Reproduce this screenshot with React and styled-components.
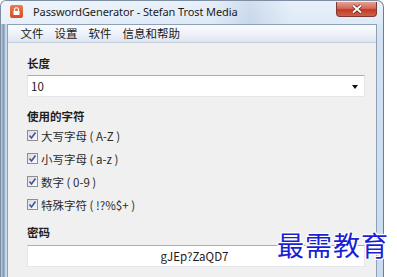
import React from "react";
import styled, { createGlobalStyle } from "styled-components";

const GlobalStyle = createGlobalStyle`
  html, body {
    margin: 0;
    padding: 0;
    background: #ffffff;
  }
  body {
    width: 397px;
    height: 277px;
    overflow: hidden;
    font-family: "Noto Sans CJK SC", "Noto Sans", sans-serif;
  }
`;

const Page = styled.div`
  position: relative;
  width: 397px;
  height: 277px;
  overflow: hidden;
`;

const Window = styled.div`
  width: 384px;
  height: 300px;
  box-sizing: border-box;
  border-radius: 6px 7px 0 0;
  border: 1px solid #7d8ea3;
  border-bottom: none;
  border-right-color: #6d7d90;
  background: linear-gradient(180deg, #e4eef9 0%, #d3e2f3 12%, #c9dbef 100%);
  display: flex;
  flex-direction: column;
  overflow: hidden;
`;

const TitleBar = styled.div`
  height: 23px;
  display: flex;
  align-items: flex-start;
  padding-left: 9px;
  background: linear-gradient(90deg, rgba(255,255,255,0.4) 0%, rgba(255,255,255,0.12) 55%, rgba(160,182,210,0.3) 65%, rgba(255,255,255,0.15) 76%);
`;

const AppIcon = styled.div`
  width: 13px;
  height: 13px;
  margin-top: 4px;
  border-radius: 2px;
  background: linear-gradient(180deg, #ee7b4d, #d34c25);
  display: flex;
  align-items: center;
  justify-content: center;
`;

const Title = styled.div`
  margin-left: 10px;
  margin-top: 3px;
  font-family: "Noto Sans", sans-serif;
  font-size: 11px;
  line-height: 16px;
  color: #1c1c1c;
  letter-spacing: -0.1px;
`;

const CloseButton = styled.div`
  margin-left: auto;
  margin-right: 6px;
  width: 41px;
  height: 15px;
  margin-top: 1px;
  box-sizing: border-box;
  border: 1px solid #7a3a33;
  border-top: none;
  border-radius: 0 0 4px 4px;
  background: linear-gradient(180deg, #e5a094 0%, #d46a58 45%, #c23a26 55%, #d0614a 100%);
  display: flex;
  align-items: center;
  justify-content: center;
`;

const Frame = styled.div`
  flex: 1;
  display: flex;
  padding-left: 6px;
  padding-right: 6px;
  background: linear-gradient(90deg, #c4d4e6 0px, #9fb3ca 1px, #7f95ae 3px, #bcd0e6 4px, #cfe0f2 6px, transparent 6px);
`;

const Inner = styled.div`
  flex: 1;
  display: flex;
  flex-direction: column;
  border: 1px solid #8ea0b6;
  border-bottom: none;
`;

const MenuBar = styled.div`
  height: 17px;
  display: flex;
  align-items: center;
  padding-left: 7px;
  background: linear-gradient(180deg, #f9fbfe 0%, #eef2f9 50%, #dde5f1 100%);
  border-bottom: 1px solid #c5cfdc;
`;

const MenuItem = styled.span`
  padding: 0 5.5px;
  font-size: 11.5px;
  line-height: 17px;
  color: #1a1a1a;
`;

const Client = styled.div`
  flex: 1;
  background: #f0f0f0;
  padding: 12px 11px 0 19px;
  display: flex;
  flex-direction: column;
`;

const Label = styled.div`
  font-size: 11.5px;
  font-weight: 700;
  line-height: 16px;
  color: #1e1e1e;
  margin-top: ${(p) => p.$top || 0}px;
  margin-bottom: ${(p) => p.$bottom || 0}px;
`;

const Field = styled.div`
  height: 22px;
  box-sizing: border-box;
  background: #ffffff;
  border: 1px solid #e3e6ea;
  border-top-color: #abadb3;
  display: flex;
  align-items: center;
  justify-content: ${(p) => (p.$center ? "center" : "space-between")};
  padding: 0 6px 0 3px;
  font-size: 11.5px;
  color: #1a1a1a;
`;

const Arrow = styled.span`
  width: 0;
  height: 0;
  border-left: 3.5px solid transparent;
  border-right: 3.5px solid transparent;
  border-top: 4px solid #111;
  margin-top: 1px;
`;

const List = styled.div`
  display: flex;
  flex-direction: column;
`;

const Row = styled.label`
  height: 23px;
  display: flex;
  align-items: center;
  font-size: 11.5px;
  color: #2a2a2a;
  white-space: pre;
`;

const Box = styled.span`
  width: 11px;
  height: 11px;
  box-sizing: border-box;
  border: 1px solid #8e8f8f;
  background: linear-gradient(135deg, #dcdcdc, #fbfbfb);
  display: flex;
  align-items: center;
  justify-content: center;
  margin-right: 3px;
`;

const Watermark = styled.div`
  position: absolute;
  left: 277px;
  top: 228px;
  font-family: "Noto Sans CJK SC", sans-serif;
  font-size: 27px;
  line-height: 34px;
  color: #1a1fd4;
  letter-spacing: 1px;
  text-shadow: 1px 1px 0 #fff, -1px -1px 0 #fff, 1px -1px 0 #fff, -1px 1px 0 #fff, 0 0 3px #fff;
`;

const options = ["大写字母 ( A-Z )", "小写字母 ( a-z )", "数字 ( 0-9 )", "特殊字符 ( !?%$+ )"];

const Check = () => (
  <svg width="9" height="9" viewBox="0 0 9 9">
    <path d="M1.5 4.5 L3.5 7 L7.5 1.5" fill="none" stroke="#3d55a0" strokeWidth="1.6" />
  </svg>
);

export default function App() {
  return (
    <Page>
      <GlobalStyle />
      <Window>
        <TitleBar>
          <AppIcon>
            <svg width="9" height="9" viewBox="0 0 9 9">
              <path d="M2.5 4 V2.8 a2 2 0 0 1 4 0 V4" fill="none" stroke="#fff" strokeWidth="1.1" />
              <rect x="1.5" y="4" width="6" height="4" fill="#fff" />
            </svg>
          </AppIcon>
          <Title>PasswordGenerator - Stefan Trost Media</Title>
          <CloseButton>
            <svg width="12" height="10" viewBox="0 0 12 10">
              <path d="M2 1.5 L10 8.5 M10 1.5 L2 8.5" stroke="#5a1a12" strokeWidth="3.2" />
              <path d="M2 1.5 L10 8.5 M10 1.5 L2 8.5" stroke="#fff" strokeWidth="2" />
            </svg>
          </CloseButton>
        </TitleBar>
        <Frame>
          <Inner>
            <MenuBar>
              <MenuItem>文件</MenuItem>
              <MenuItem>设置</MenuItem>
              <MenuItem>软件</MenuItem>
              <MenuItem>信息和帮助</MenuItem>
            </MenuBar>
            <Client>
              <Label $bottom={4}>长度</Label>
              <Field>
                <span>10</span>
                <Arrow />
              </Field>
              <Label $top={11}>使用的字符</Label>
              <List>
                {options.map((o) => (
                  <Row key={o}>
                    <Box>
                      <Check />
                    </Box>
                    {o}
                  </Row>
                ))}
              </List>
              <Label $top={8} $bottom={5}>密码</Label>
              <Field $center>gJEp?ZaQD7</Field>
            </Client>
          </Inner>
        </Frame>
      </Window>
      <Watermark>最需教育</Watermark>
    </Page>
  );
}
